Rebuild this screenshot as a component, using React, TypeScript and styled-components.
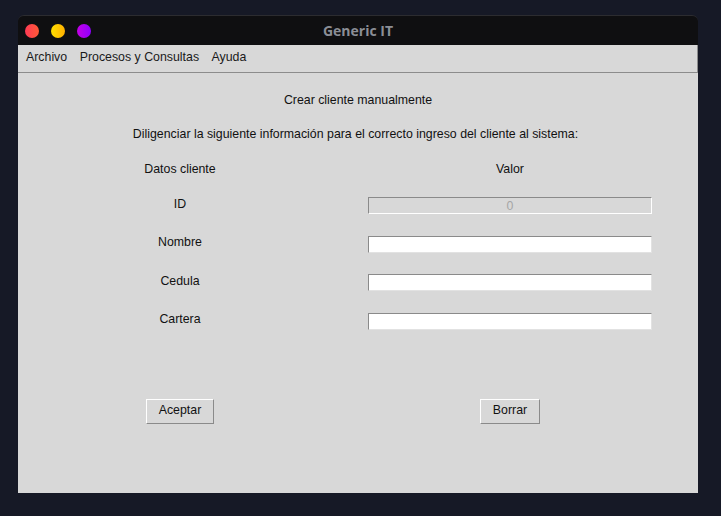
import * as React from "react";
import styled, { createGlobalStyle } from "styled-components";

const GlobalStyle = createGlobalStyle`
  html, body {
    margin: 0;
    padding: 0;
    background: #161926;
    font-family: "Liberation Sans", Arial, sans-serif;
  }
`;

const Desktop = styled.div`
  width: 721px;
  height: 516px;
  padding: 15px 0 0 18px;
  box-sizing: border-box;
`;

const Window = styled.div`
  width: 680px;
  display: flex;
  flex-direction: column;
`;

const TitleBar = styled.div`
  height: 30px;
  background: #0f0f11;
  border-top: 1px solid #2c2c30;
  border-radius: 6px 6px 0 0;
  box-sizing: border-box;
  display: flex;
  align-items: center;
  padding-left: 7px;
  position: relative;
`;

const Light = styled.span<{ $from: string; $to: string }>`
  width: 14px;
  height: 14px;
  border-radius: 50%;
  margin-right: 12px;
  background: linear-gradient(90deg, ${(p) => p.$from}, ${(p) => p.$to});
`;

const Title = styled.div`
  position: absolute;
  left: 0;
  right: 0;
  top: 5px;
  text-align: center;
  font-family: "Open Sans", "DejaVu Sans", sans-serif;
  font-weight: 700;
  font-size: 14px;
  color: #8b8e96;
  pointer-events: none;
`;

const MenuBar = styled.div`
  height: 28px;
  width: 680px;
  background: #d8d8d8;
  border-bottom: 1px solid #8c8c8c;
  border-right: 1px solid #8c8c8c;
  box-sizing: border-box;
  display: flex;
  align-items: center;
  padding-left: 8px;
  gap: 12.5px;
`;

const MenuItem = styled.span`
  font-size: 12.35px;
  color: #1a1a1a;
  margin-top: -3px;
`;

const Content = styled.div`
  height: 420px;
  background: #d8d8d8;
  display: flex;
  flex-direction: column;
  align-items: center;
  font-size: 12.35px;
  color: #111;
`;

const Heading = styled.div`
  line-height: 16px;
  margin-top: 19px;
`;

const Intro = styled.div`
  line-height: 16px;
  margin-top: 18px;
  padding-right: 5px;
`;

const FormGrid = styled.div`
  align-self: flex-start;
  margin: 18px 0 0 82px;
  display: grid;
  grid-template-columns: 160px 284px;
  grid-auto-rows: 17px;
  grid-template-rows: 16px;
  column-gap: 108px;
  row-gap: 21.4px;
  align-items: center;
  justify-items: center;
`;

const Cell = styled.div<{ $head?: boolean }>`
  line-height: 16px;
  margin-top: ${(p) => (p.$head ? "2px" : "-4px")};
`;

const Field = styled.input<{ $locked?: boolean }>`
  width: 284px;
  height: 17px;
  box-sizing: border-box;
  margin: 0;
  padding: 0 3px;
  font-family: "Liberation Sans", Arial, sans-serif;
  font-size: 12.35px;
  text-align: center;
  color: #a6a6a6;
  background: ${(p) => (p.$locked ? "#d8d8d8" : "#ffffff")};
  border-style: solid;
  border-width: 1px;
  border-color: #8a8a8a ${(p) => (p.$locked ? "#ffffff" : "#e2e2e2")}
    ${(p) => (p.$locked ? "#ffffff" : "#e2e2e2")} #8a8a8a;
  outline: none;
`;

const ButtonRow = styled.div`
  align-self: flex-start;
  margin: 69px 0 0 82px;
  display: grid;
  grid-template-columns: 160px 284px;
  column-gap: 108px;
  justify-items: center;
`;

const Button = styled.button<{ $w: number }>`
  width: ${(p) => p.$w}px;
  height: 25px;
  box-sizing: border-box;
  background: #d8d8d8;
  border-style: solid;
  border-width: 1px;
  border-color: #ffffff #8a8a8a #8a8a8a #ffffff;
  font-family: "Liberation Sans", Arial, sans-serif;
  font-size: 12.35px;
  color: #111;
  padding: 0 0 3px;
`;

const rows = [
  { label: "ID", value: "0", locked: true },
  { label: "Nombre", value: "" },
  { label: "Cedula", value: "" },
  { label: "Cartera", value: "" },
];

const App: React.FC = (): React.ReactElement => {
  return (
    <Desktop>
      <GlobalStyle />
      <Window>
        <TitleBar>
          <Light $from="#ff3a55" $to="#ff5a36" />
          <Light $from="#ffe000" $to="#ffb000" />
          <Light $from="#c400e6" $to="#8f00ff" />
          <Title>Generic IT</Title>
        </TitleBar>
        <MenuBar>
          <MenuItem>Archivo</MenuItem>
          <MenuItem>Procesos y Consultas</MenuItem>
          <MenuItem>Ayuda</MenuItem>
        </MenuBar>
        <Content>
          <Heading>Crear cliente manualmente</Heading>
          <Intro>
            Diligenciar la siguiente información para el correcto ingreso del
            cliente al sistema:
          </Intro>
          <FormGrid>
            <Cell $head>Datos cliente</Cell>
            <Cell $head>Valor</Cell>
            {rows.map((r) => (
              <React.Fragment key={r.label}>
                <Cell>{r.label}</Cell>
                <Field
                  $locked={r.locked}
                  readOnly={r.locked}
                  defaultValue={r.value}
                />
              </React.Fragment>
            ))}
          </FormGrid>
          <ButtonRow>
            <Button $w={68}>Aceptar</Button>
            <Button $w={60}>Borrar</Button>
          </ButtonRow>
        </Content>
      </Window>
    </Desktop>
  );
};

export default App;
